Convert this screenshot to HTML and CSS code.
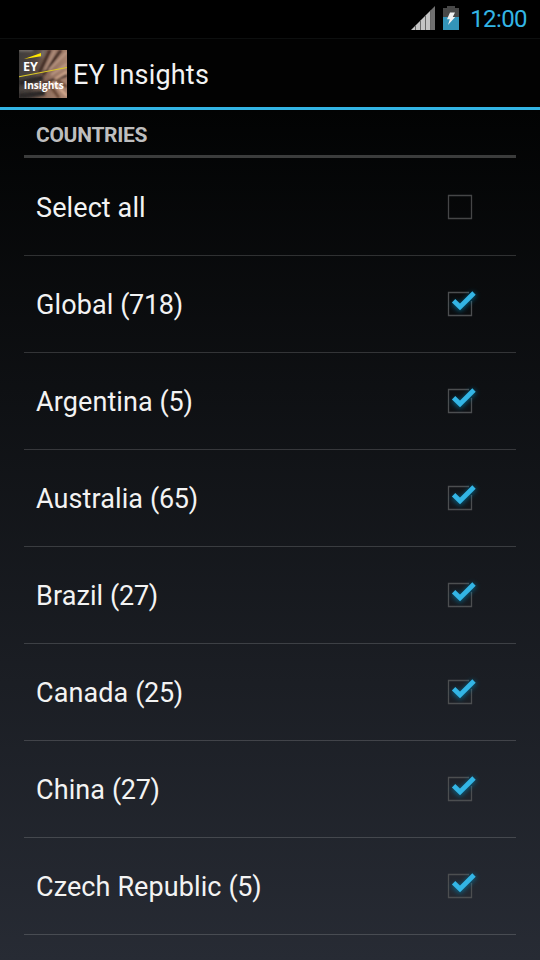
FILE: index.html
```
<!DOCTYPE html>
<html lang="en">
<head>
  <meta charset="UTF-8" />
  <meta name="viewport" content="width=device-width, initial-scale=1" />
  <title>EY Insights</title>

  <link rel="stylesheet" href="styles.css">
</head>
<body>
  <!-- Shared icon shapes -->
  <svg class="sprite" width="0" height="0">
    <defs>
      <filter id="glow" x="-50%" y="-50%" width="200%" height="200%">
        <feGaussianBlur stdDeviation="2.6" />
      </filter>
      <symbol id="check" viewBox="0 0 48 48">
        <path d="M33 12.5H12.5V35.5H35.5V21" fill="none" stroke="#4c4e50" stroke-width="1.3" />
        <path d="M17.5 22.5L24 28L38.5 13.5" fill="none" stroke="#0088b8" stroke-width="6" opacity="0.6" filter="url(#glow)" />
        <path d="M17.6 20.8L24 27L38 13" fill="none" stroke="#33b5e5" stroke-width="4.8" />
      </symbol>
    </defs>
  </svg>

  <div class="status-bar">
    <svg class="signal" width="24" height="24" viewBox="0 0 24 24">
      <path d="M0 24L19 5V24Z" fill="#c4c4c4" />
      <path d="M19 5L24 0V24H19Z" fill="#707070" />
      <path d="M4.5 19.5V24M9.5 14.5V24M14.5 9.5V24M19.5 4.5V24" stroke="#666" stroke-width="1" />
    </svg>
    <svg class="battery" width="16" height="24" viewBox="0 0 16 24">
      <path d="M4 0H12V2H16V11H0V2H4Z" fill="#484848" />
      <path d="M0 11H16V24H0Z" fill="#3394b9" />
      <path d="M7 6.5H12L9.8 11H12.2L5 19L6.8 13.2H4Z" fill="#f2f2f2" />
    </svg>
    <span class="clock">12:00</span>
  </div>

  <header>
    <svg class="logo" width="48" height="48" viewBox="0 0 48 48">
      <defs>
        <linearGradient id="photo" x1="0" y1="0" x2="1" y2="0.15">
          <stop offset="0" stop-color="#3f3d3c" />
          <stop offset="0.35" stop-color="#4d443f" />
          <stop offset="0.65" stop-color="#8a6a5a" />
          <stop offset="1" stop-color="#a8836f" />
        </linearGradient>
        <filter id="soft"><feGaussianBlur stdDeviation="0.9" /></filter>
        <clipPath id="frame"><path d="M0 0H48V48H0Z" /></clipPath>
      </defs>
      <g clip-path="url(#frame)">
        <path d="M0 0H48V48H0Z" fill="url(#photo)" />
        <g filter="url(#soft)" fill="none">
          <path d="M0 0L14 0M22 7L25 0" stroke="#77716c" stroke-width="3" />
          <path d="M20 23L31 0M24 25L42 0M23 34L48 25" stroke="#37241f" stroke-width="2.4" />
          <path d="M26 20L36 0M30 20L48 2M32 25L48 14" stroke="#c6a28e" stroke-width="1.6" />
          <path d="M36 29L48 22M34 32L48 46" stroke="#e0b598" stroke-width="2" />
          <path d="M28 31L40 48M38 30L48 37" stroke="#60402f" stroke-width="2.6" />
          <path d="M0 33L24 28M0 46L26 43" stroke="#2a2726" stroke-width="5" />
        </g>
        <path d="M5 9L22 3V6.2Z" fill="#ffe600" />
        <path d="M0 26.8L48 17.5" stroke="#dccb24" stroke-width="1.1" />
      </g>
      <text class="logo-ey" x="4" y="21" textLength="15" lengthAdjust="spacingAndGlyphs">EY</text>
      <text class="logo-name" x="4.8" y="39.4" textLength="40" lengthAdjust="spacingAndGlyphs">Insights</text>
    </svg>
    <h1>EY Insights</h1>
  </header>

  <main>
    <h2>Countries</h2>
    <ul class="country-list">
      <li>
        <span class="name">Select all</span>
        <svg class="checkbox" width="48" height="48" viewBox="0 0 48 48">
          <path d="M12.5 12.5H35.5V35.5H12.5Z" fill="none" stroke="#454647" stroke-width="1.3" />
        </svg>
      </li>
      <li>
        <span class="name">Global <span class="count">(718)</span></span>
        <svg class="checkbox" width="48" height="48"><use href="#check" /></svg>
      </li>
      <li>
        <span class="name">Argentina <span class="count">(5)</span></span>
        <svg class="checkbox" width="48" height="48"><use href="#check" /></svg>
      </li>
      <li>
        <span class="name">Australia <span class="count">(65)</span></span>
        <svg class="checkbox" width="48" height="48"><use href="#check" /></svg>
      </li>
      <li>
        <span class="name">Brazil <span class="count">(27)</span></span>
        <svg class="checkbox" width="48" height="48"><use href="#check" /></svg>
      </li>
      <li>
        <span class="name">Canada <span class="count">(25)</span></span>
        <svg class="checkbox" width="48" height="48"><use href="#check" /></svg>
      </li>
      <li>
        <span class="name">China <span class="count">(27)</span></span>
        <svg class="checkbox" width="48" height="48"><use href="#check" /></svg>
      </li>
      <li>
        <span class="name">Czech Republic <span class="count">(5)</span></span>
        <svg class="checkbox" width="48" height="48"><use href="#check" /></svg>
      </li>
    </ul>
  </main>
</body>
</html>
```
FILE: styles.css
```
*, *::before, *::after {
  box-sizing: border-box;
}

body {
  margin: 0;
  height: 960px;
  overflow: hidden;
  font-family: Roboto, sans-serif;
  color: #f3f3f3;
  background: linear-gradient(180deg, #000000 0, #020303 110px, #272b34 960px);
}

.sprite {
  display: block;
}

/* System status bar */
.status-bar {
  display: flex;
  align-items: center;
  justify-content: flex-end;
  height: 38px;
  padding-right: 13px;
  background: #000;
}

.signal,
.battery {
  margin-top: -2px;
}

.battery {
  margin-left: 8px;
}

.clock {
  margin-left: 11px;
  font-size: 24px;
  line-height: 38px;
  letter-spacing: -0.6px;
  color: #33b5e5;
}

/* Action bar */
header {
  display: flex;
  align-items: center;
  height: 72px;
  padding: 0 19px;
  background: #020202;
  border-top: 1px solid #0d0f0f;
  border-bottom: 3px solid #33b5e5;
}

.logo {
  margin-top: 2px;
  overflow: visible;
}

.logo-ey,
.logo-name {
  font-family: "Open Sans", sans-serif;
  font-weight: 700;
  fill: #fff;
}

.logo-ey {
  font-size: 12.5px;
}

.logo-name {
  font-size: 11px;
}

h1 {
  margin: 3px 0 0 6px;
  font-size: 27px;
  font-weight: 400;
  letter-spacing: 0.2px;
}

/* Country picker */
main {
  padding: 0 24px;
}

h2 {
  height: 48px;
  margin: 0 0 1px;
  padding-left: 12px;
  border-bottom: 3px solid #3b3c3c;
  font-size: 21px;
  font-weight: 700;
  line-height: 51px;
  letter-spacing: -0.3px;
  text-transform: uppercase;
  color: #bebebe;
}

.country-list {
  margin: 0;
  padding: 0;
  list-style: none;
}

.country-list li {
  display: flex;
  align-items: center;
  justify-content: space-between;
  height: 97px;
  padding: 0 32px 0 12px;
  border-bottom: 1px solid rgba(255, 255, 255, 0.16);
  font-size: 27px;
}

.name {
  margin-top: 2px;
  letter-spacing: 0.1px;
}

.count {
  letter-spacing: -0.3px;
}
```
